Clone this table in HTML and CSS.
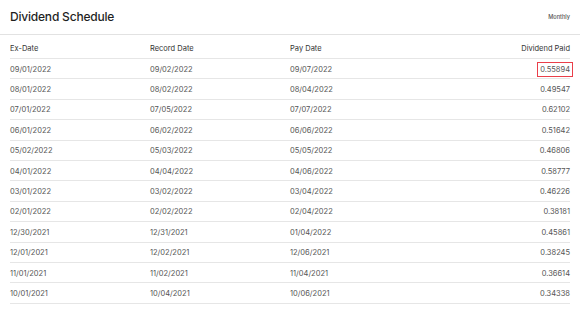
FILE: index.html
```html
<!DOCTYPE html>
<html>
<head>
<meta charset="utf-8">
<link rel="stylesheet" href="styles.css">
</head>
<body>
<div class="panel">
  <div class="panel-head">
    <h2 class="title">Dividend Schedule</h2>
    <span class="freq">Monthly</span>
  </div>
  <table class="sched">
    <thead>
      <tr><th>Ex-Date</th><th>Record Date</th><th>Pay Date</th><th class="num">Dividend Paid</th></tr>
    </thead>
    <tbody>
      <tr><td>09/01/2022</td><td>09/02/2022</td><td>09/07/2022</td><td class="num"><span class="hl">0.55894</span></td></tr>
      <tr><td>08/01/2022</td><td>08/02/2022</td><td>08/04/2022</td><td class="num">0.49547</td></tr>
      <tr><td>07/01/2022</td><td>07/05/2022</td><td>07/07/2022</td><td class="num">0.62102</td></tr>
      <tr><td>06/01/2022</td><td>06/02/2022</td><td>06/06/2022</td><td class="num">0.51642</td></tr>
      <tr><td>05/02/2022</td><td>05/03/2022</td><td>05/05/2022</td><td class="num">0.46806</td></tr>
      <tr><td>04/01/2022</td><td>04/04/2022</td><td>04/06/2022</td><td class="num">0.58777</td></tr>
      <tr><td>03/01/2022</td><td>03/02/2022</td><td>03/04/2022</td><td class="num">0.46226</td></tr>
      <tr><td>02/01/2022</td><td>02/02/2022</td><td>02/04/2022</td><td class="num">0.38181</td></tr>
      <tr><td>12/30/2021</td><td>12/31/2021</td><td>01/04/2022</td><td class="num">0.45861</td></tr>
      <tr><td>12/01/2021</td><td>12/02/2021</td><td>12/06/2021</td><td class="num">0.38245</td></tr>
      <tr><td>11/01/2021</td><td>11/02/2021</td><td>11/04/2021</td><td class="num">0.36614</td></tr>
      <tr><td>10/01/2021</td><td>10/04/2021</td><td>10/06/2021</td><td class="num">0.34338</td></tr>
    </tbody>
  </table>
</div>
</body>
</html>
```
FILE: styles.css
```css
html, body {
  margin: 0;
  padding: 0;
  background: #fff;
}
body {
  font-family: "Inter", "Liberation Sans", sans-serif;
  color: #555;
}
.panel {
  width: 580px;
}
.panel-head {
  display: flex;
  align-items: center;
  justify-content: space-between;
  height: 35px;
  padding: 0 10px 1px;
  box-sizing: border-box;
  border-bottom: 1px solid #e2e2e2;
}
.title {
  margin: 0;
  font-size: 12px;
  font-weight: 500;
  color: #1f1f1f;
  letter-spacing: -0.2px;
}
.freq {
  font-size: 5.6px;
  color: #555;
  font-weight: 500;
}
.sched {
  width: 560px;
  margin: 0 10px;
  border-collapse: collapse;
  table-layout: fixed;
}
.sched th,
.sched td {
  padding: 0;
  text-align: left;
  font-size: 7.5px;
  border-bottom: 1px solid #e6e6e6;
  white-space: nowrap;
}
.sched th {
  height: 19px;
  padding-top: 4px;
  font-weight: 400;
  color: #333;
}
.sched td {
  height: 18.4px;
  padding-top: 1px;
  color: #555;
}
.sched .num {
  text-align: right;
}
.hl {
  outline: 1px solid #ea3f4a;
  outline-offset: 2px;
}
```
